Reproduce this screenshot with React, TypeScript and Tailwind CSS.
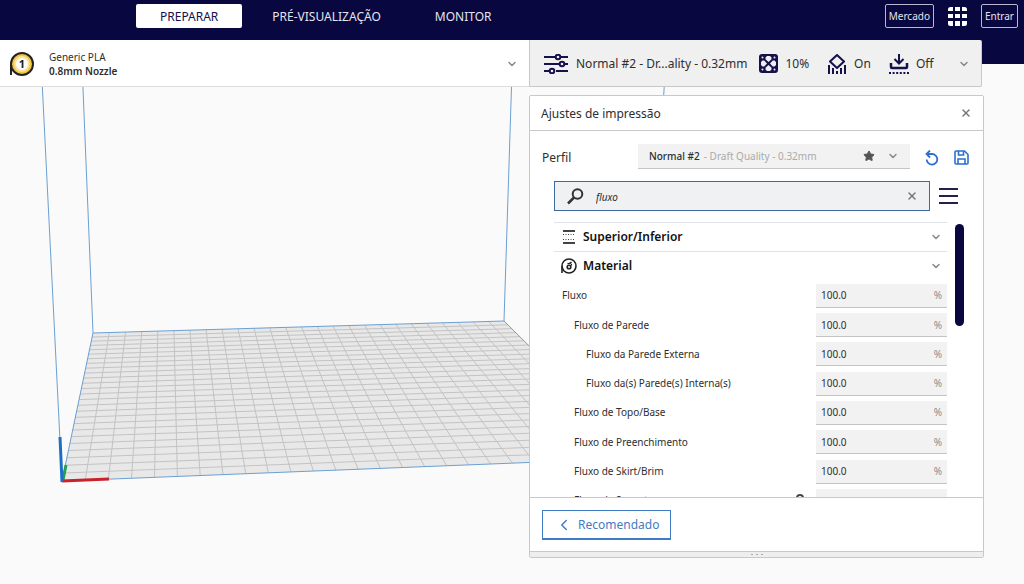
import { ChevronDown, ChevronLeft, Star, X } from "lucide-react";

type Point = [number, number];

const CELLS = 26;
const BACK_LEFT: Point = [93, 333];
const BACK_RIGHT: Point = [504, 321];
const FRONT_RIGHT: Point = [642, 458];
const FRONT_LEFT: Point = [62, 481];

// maps the unit square (u = left to right, v = back to front) onto the plate
function project(u: number, v: number): Point {
	const [x0, y0] = BACK_LEFT;
	const [x1, y1] = BACK_RIGHT;
	const [x2, y2] = FRONT_RIGHT;
	const [x3, y3] = FRONT_LEFT;
	const dx1 = x1 - x2;
	const dx2 = x3 - x2;
	const dx3 = x0 - x1 + x2 - x3;
	const dy1 = y1 - y2;
	const dy2 = y3 - y2;
	const dy3 = y0 - y1 + y2 - y3;
	const det = dx1 * dy2 - dx2 * dy1;
	const g = (dx3 * dy2 - dx2 * dy3) / det;
	const h = (dx1 * dy3 - dx3 * dy1) / det;
	const w = g * u + h * v + 1;
	return [
		((x1 - x0 + g * x1) * u + (x3 - x0 + h * x3) * v + x0) / w,
		((y1 - y0 + g * y1) * u + (y3 - y0 + h * y3) * v + y0) / w,
	];
}

function Line({ from, to }: { from: Point; to: Point }) {
	return <line x1={from[0]} y1={from[1]} x2={to[0]} y2={to[1]} />;
}

function BuildPlate() {
	const steps = Array.from({ length: CELLS - 1 }, (_, i) => (i + 1) / CELLS);
	const corners = [BACK_LEFT, BACK_RIGHT, FRONT_RIGHT, FRONT_LEFT].join(" ");
	return (
		<svg className="absolute left-0 top-0" width="1024" height="584" fill="none" aria-hidden="true">
			<polygon points={corners} fill="#e8e8e8" />
			<g stroke="#c3c3c3">
				{steps.map((t) => (
					<Line key={`u${t}`} from={project(t, 0)} to={project(t, 1)} />
				))}
				{steps.map((t) => (
					<Line key={`v${t}`} from={project(0, t)} to={project(1, t)} />
				))}
			</g>
			<g stroke="#6c9fd0">
				<polygon points={corners} />
				<Line from={[40, 40]} to={FRONT_LEFT} />
				<Line from={[81, 40]} to={BACK_LEFT} />
				<Line from={[513, 40]} to={BACK_RIGHT} />
				<Line from={[667, 40]} to={FRONT_RIGHT} />
			</g>
			<g strokeWidth="3">
				<path d="M63 480 66 465" stroke="#25a04c" />
				<path d="M62 481 109 479" stroke="#c8232c" />
				<path d="M62 482 60 437" stroke="#1d6fc4" />
			</g>
		</svg>
	);
}

function AppsIcon() {
	return (
		<svg width="19" height="19" viewBox="0 0 19 19" fill="#fff">
			<path d="M2.500 0H5v4H0V2.500A2.500 2.500 0 0 1 2.500 0ZM7 0h5v4H7ZM14 0h2.500A2.500 2.500 0 0 1 19 2.500V4h-5ZM0 7h5v4H0ZM7 7h5v4H7ZM14 7h5v4h-5ZM0 14h5v5H2.500A2.500 2.500 0 0 1 0 16.500ZM7 14h5v5H7ZM14 14h5v2.500a2.500 2.500 0 0 1-2.500 2.500H14Z" />
		</svg>
	);
}

function SpoolIcon() {
	return (
		<svg width="26" height="26" viewBox="0 0 26 26">
			<path d="M2 13v11" stroke="#222" strokeWidth="2" />
			<circle cx="13" cy="13" r="11" fill="#f3c444" stroke="#222" strokeWidth="2" />
			<circle cx="13" cy="13" r="7" fill="#fff" stroke="#fbe39a" strokeWidth="2" />
			<text x="13" y="17" textAnchor="middle" fontSize="11" fontWeight="700" fill="#222">
				1
			</text>
		</svg>
	);
}

function SlidersIcon() {
	return (
		<svg width="24" height="20" viewBox="0 0 24 20" fill="none" stroke="#14114b" strokeWidth="2">
			<path d="M0 3h11M17 3h7M0 10h15M21 10h3M0 17h5M12 17h12" />
			<circle cx="14" cy="3" r="2.300" />
			<circle cx="18" cy="10" r="2.300" />
			<circle cx="8" cy="17" r="2.300" />
		</svg>
	);
}

function InfillIcon() {
	return (
		<svg width="19" height="19" viewBox="0 0 19 19">
			<rect width="19" height="19" rx="3" fill="#14114b" />
			<g fill="#f0f0f0">
				<path d="M9.500 8 6.500 5.200V3.500L8 2h3l1.500 1.500v1.700ZM9.500 11l3 2.800v1.700L11 17H8l-1.500-1.500v-1.700ZM8 9.500l-2.800 3H3.500L2 11V8l1.500-1.500h1.700ZM11 9.500l2.800-3h1.700L17 8v3l-1.500 1.500h-1.700Z" />
				<circle cx="3.500" cy="3.500" r="1" />
				<circle cx="15.500" cy="3.500" r="1" />
				<circle cx="3.500" cy="15.500" r="1" />
				<circle cx="15.500" cy="15.500" r="1" />
			</g>
		</svg>
	);
}

function SupportIcon() {
	return (
		<svg width="20" height="20" viewBox="0 0 20 20" fill="none" stroke="#14114b" strokeWidth="2">
			<path d="M10 1 17 7.500 10 14 3 7.500Z" strokeLinejoin="round" />
			<path d="M2 11v9M6 14v6M10 17v3M14 14v6M18 11v9" />
		</svg>
	);
}

function AdhesionIcon() {
	return (
		<svg width="20" height="20" viewBox="0 0 20 20" fill="none" stroke="#14114b" strokeWidth="2">
			<path d="M10 0v9M5.500 5l4.500 4.500L14.500 5" />
			<path d="M2 9v4a1 1 0 0 0 1 1h14a1 1 0 0 0 1-1V9" strokeWidth="2.500" />
			<path d="M0 19h20" strokeDasharray="2 1.600" />
		</svg>
	);
}

function SearchIcon() {
	return (
		<svg width="17" height="17" viewBox="0 0 17 17" fill="none" stroke="#333" strokeWidth="2">
			<circle cx="10.500" cy="6" r="4.800" />
			<path d="M7 9.500 1 15.500" strokeWidth="2.500" />
		</svg>
	);
}

function UndoIcon() {
	return (
		<svg width="15" height="16" viewBox="0 0 15 16" fill="none" stroke="currentColor" strokeWidth="1.800">
			<path d="M3.500 4H8A5.300 5.300 0 1 1 2.700 9.500" />
			<path d="M6 0.500 2.500 4 6 7.500" />
		</svg>
	);
}

function SaveIcon() {
	return (
		<svg width="15" height="15" viewBox="0 0 15 15" fill="none" stroke="currentColor" strokeWidth="1.600">
			<path d="M1 2a1 1 0 0 1 1-1h8.500L14 4.500V13a1 1 0 0 1-1 1H2a1 1 0 0 1-1-1Z" />
			<path d="M4.500 1v4h5V1M4 14V9h7v5" />
		</svg>
	);
}

function TopBottomIcon() {
	return (
		<svg width="14" height="14" viewBox="0 0 14 14" stroke="#444">
			<path d="M1 1h12M1 13h12" strokeWidth="1.800" />
			<path d="M1 4.500h12M1 9.500h12" strokeDasharray="1 1.500" />
		</svg>
	);
}

function MaterialIcon() {
	return (
		<svg width="16" height="16" viewBox="0 0 16 16" fill="none" stroke="#222">
			<path d="M1 15V8" strokeWidth="1.600" />
			<circle cx="8" cy="8" r="7" strokeWidth="1.600" />
			<circle cx="8" cy="9" r="1.800" strokeWidth="1.600" />
			<path d="M6.500 5.500Q9 6 10.500 4M9.500 8l1.300-2" strokeWidth="1.300" />
		</svg>
	);
}

function Header() {
	const outlined = "h-6 rounded-xs border border-[#b9b8d0] px-[3px] pt-px text-[10px]";
	return (
		<header className="relative flex h-16 items-start bg-[#08073f] pl-[136px] pr-[6px] pt-1 text-white">
			<nav className="flex gap-[6px] text-xs text-[#e4e4ee]">
				<button className="h-6 rounded-xs bg-white px-6 pt-px text-[#14114b]">PREPARAR</button>
				<button className="h-6 px-6 pt-px">PRÉ-VISUALIZAÇÃO</button>
				<button className="h-6 px-6 pt-px">MONITOR</button>
			</nav>
			<div className="ml-auto flex items-center gap-[14px] text-[#e4e4ee]">
				<button className={outlined}>Mercado</button>
				<button aria-label="Aplicativos">
					<AppsIcon />
				</button>
				<button className={outlined}>Entrar</button>
			</div>
		</header>
	);
}

function StageBar() {
	return (
		<div className="relative -mt-6 mr-[42px] flex h-[47px]">
			<button className="flex flex-1 items-center border-b border-[#dcdcdc] bg-white pl-[9px] pr-[11px] pt-px text-left">
				<SpoolIcon />
				<span className="ml-[14px] flex flex-col text-[10px] leading-[14px]">
					<span>Generic PLA</span>
					<span className="font-semibold">0.8mm Nozzle</span>
				</span>
				<ChevronDown className="ml-auto text-[#888]" size={12} strokeWidth={3} />
			</button>
			<button className="flex w-[453px] items-center rounded-r-xs border border-t-0 border-[#c8c8c8] bg-[#f0f0f0] pl-[14px] pr-[11px] pt-px text-xs">
				<SlidersIcon />
				<span className="ml-2">Normal #2 - Dr...ality - 0.32mm</span>
				<span className="ml-3 flex items-center gap-[7px]">
					<InfillIcon />
					10%
				</span>
				<span className="ml-[18px] flex items-center gap-[7px]">
					<SupportIcon />
					On
				</span>
				<span className="ml-[18px] flex items-center gap-[7px]">
					<AdhesionIcon />
					Off
				</span>
				<ChevronDown className="ml-auto text-[#888]" size={12} strokeWidth={3} />
			</button>
		</div>
	);
}

const settings = [
	{ label: "Fluxo", indent: "pl-2", value: "100.0" },
	{ label: "Fluxo de Parede", indent: "pl-5", value: "100.0" },
	{ label: "Fluxo da Parede Externa", indent: "pl-8", value: "100.0" },
	{ label: "Fluxo da(s) Parede(s) Interna(s)", indent: "pl-8", value: "100.0" },
	{ label: "Fluxo de Topo/Base", indent: "pl-5", value: "100.0" },
	{ label: "Fluxo de Preenchimento", indent: "pl-5", value: "100.0" },
	{ label: "Fluxo de Skirt/Brim", indent: "pl-5", value: "100.0" },
	{ label: "Fluxo de Suporte", indent: "pl-5", value: "", linked: true },
];

type Setting = { label: string; indent: string; value: string; linked?: boolean };

function SettingRow({ label, indent, value, linked }: Setting) {
	const id = label.toLowerCase().replace(/\W+/g, "-");
	return (
		<div className="flex items-center pt-px">
			<label htmlFor={id} className={`flex-1 ${indent}`}>
				{label}
			</label>
			{linked && (
				<svg className="mr-3" width="8" height="14" viewBox="0 0 8 14" fill="none" stroke="#444" strokeWidth="2">
					<rect x="1" y="1" width="6" height="6" rx="3" />
					<rect x="1" y="7" width="6" height="6" rx="3" />
				</svg>
			)}
			<div className="flex h-6 w-[131px] items-center border-b border-[#c4c4c4] bg-[#f2f2f2] pl-[5px] pr-[5px] pt-px">
				<input id={id} className="min-w-0 flex-1 bg-transparent outline-none" defaultValue={value} />
				{value && <span className="text-[#8a8a8a]">%</span>}
			</div>
		</div>
	);
}

function SectionHeader({ icon, title }: { icon: React.ReactNode; title: string }) {
	return (
		<button className="flex items-center border-t border-[#dfe3e8] pl-[6px] pr-[5px] text-xs font-semibold text-[#111]">
			<span className="flex w-[17px] justify-center">{icon}</span>
			<span className="ml-[6px]">{title}</span>
			<ChevronDown className="ml-auto text-[#888]" size={12} strokeWidth={3} />
		</button>
	);
}

function SettingsPanel() {
	return (
		<section className="relative ml-auto mr-10 mt-2 w-[455px] rounded-xs border border-[#c8c8c8] bg-white">
			<div className="flex h-[35px] items-center justify-between border-b border-[#c8c8c8] pl-[11px] pr-[11px]">
				<h2 className="pt-px text-xs">Ajustes de impressão</h2>
				<button aria-label="Fechar">
					<X className="text-[#777]" size={12} strokeWidth={3} />
				</button>
			</div>

			<div className="flex items-center pl-3 pr-[14px] pt-[13px]">
				<span className="w-24 pt-[2px] text-xs">Perfil</span>
				<button className="flex h-[25px] flex-1 items-center border-b border-[#c4c4c4] bg-[#f2f2f2] pl-[11px] pr-[11px] text-[10px]" aria-haspopup="listbox">
					<span className="font-medium">Normal #2</span>
					<span className="ml-1 text-[#aaa]">- Draft Quality - 0.32mm</span>
					<Star className="ml-auto mr-3 fill-[#555] text-[#555]" size={12} />
					<ChevronDown className="text-[#888]" size={12} strokeWidth={3} />
				</button>
				<button className="ml-[14px] pt-[2px] text-[#2d6fd0]" aria-label="Descartar alterações">
					<UndoIcon />
				</button>
				<button className="ml-[15px] pt-px text-[#2d6fd0]" aria-label="Salvar perfil">
					<SaveIcon />
				</button>
			</div>

			<div className="mt-3 flex items-center pl-6 pr-[25px]">
				<div className="flex h-[30px] flex-1 items-center border border-[#3c6a9c] bg-[#f0f1f2] pl-3 pr-[11px]">
					<SearchIcon />
					<input className="ml-3 min-w-0 flex-1 bg-transparent pt-[3px] text-[10px] italic outline-none" aria-label="Buscar ajustes" defaultValue="fluxo" />
					<button aria-label="Limpar busca">
						<X className="text-[#777]" size={12} strokeWidth={3} />
					</button>
				</div>
				<button className="ml-[9px] flex w-[19px] flex-col gap-[5px]" aria-label="Visibilidade dos ajustes">
					<span className="h-[2px] w-full bg-[#24204a]" />
					<span className="h-[2px] w-full bg-[#24204a]" />
					<span className="h-[2px] w-full bg-[#24204a]" />
				</button>
			</div>

			<div className="mt-[11px] flex h-[275px] overflow-hidden pl-6 pr-[19px]">
				<div className="grid h-[293px] flex-1 auto-rows-fr text-[10px]">
					<SectionHeader icon={<TopBottomIcon />} title="Superior/Inferior" />
					<SectionHeader icon={<MaterialIcon />} title="Material" />
					{settings.map((setting) => (
						<SettingRow key={setting.label} {...setting} />
					))}
				</div>
				<div className="ml-2 mt-[2px] h-[102px] w-[9px] rounded-full bg-[#08073f]" />
			</div>

			<div className="border-t border-[#c8c8c8] px-3 pb-[11px] pt-3">
				<button className="flex h-[30px] items-center border border-b-2 border-[#3f7cc4] pl-3 pr-[11px] text-xs text-[#3f7cc4]">
					<ChevronLeft size={18} />
					<span className="ml-[5px] pt-px">Recomendado</span>
				</button>
			</div>
			<div className="flex h-[6px] items-center justify-center gap-[3px] border-t border-[#c8c8c8] bg-[#eee]">
				<span className="h-px w-[2px] bg-[#aaa]" />
				<span className="h-px w-[2px] bg-[#aaa]" />
				<span className="h-px w-[2px] bg-[#aaa]" />
			</div>
		</section>
	);
}

export default function App() {
	return (
		<div className="relative min-h-screen overflow-hidden bg-[#fafafa] font-['Noto_Sans',sans-serif] text-[#2e2e2e]">
			<BuildPlate />
			<Header />
			<StageBar />
			<SettingsPanel />
		</div>
	);
}
